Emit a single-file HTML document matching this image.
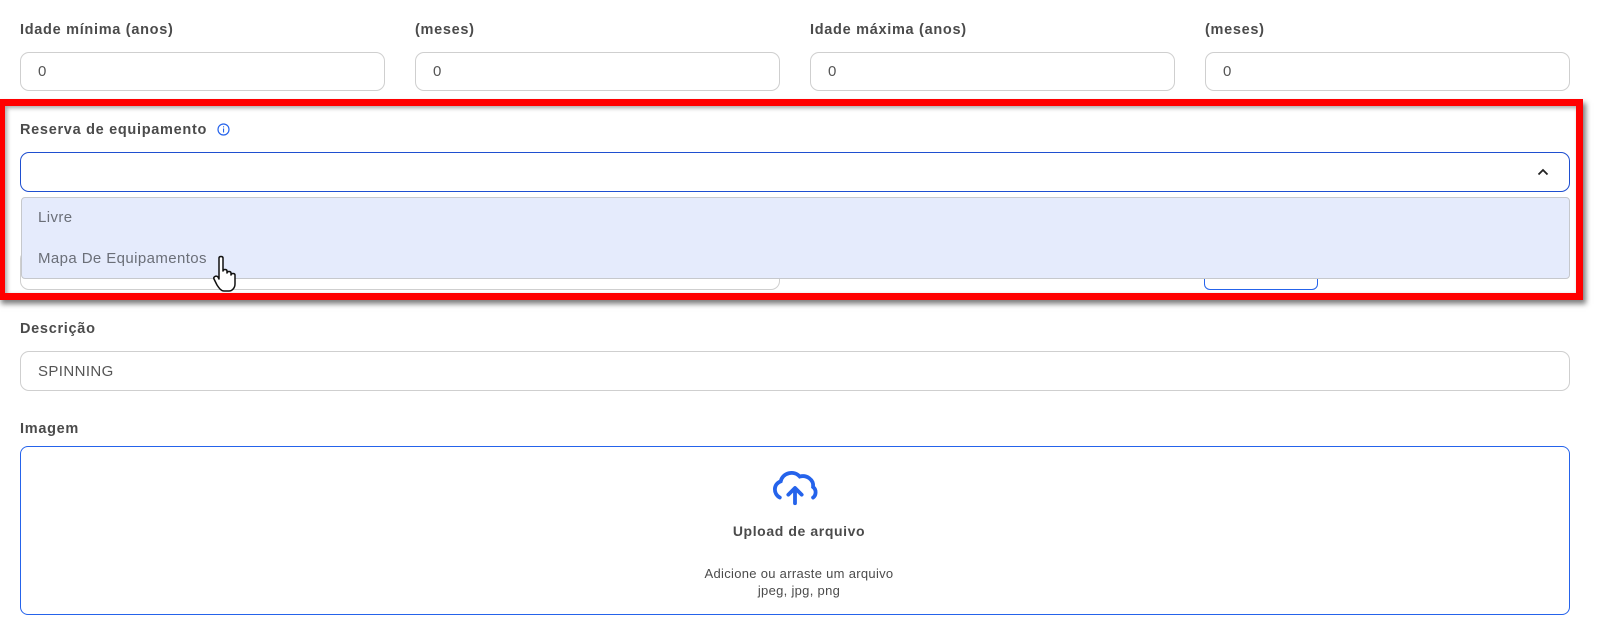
<!DOCTYPE html>
<html><head><meta charset="utf-8"><style>
*{box-sizing:border-box;margin:0;padding:0}
body{width:1598px;height:637px;background:#fff;position:relative;overflow:hidden;font-family:"Liberation Sans",sans-serif;color:#4a4a4a}
.lbl{position:absolute;font-weight:bold;font-size:14.5px;letter-spacing:0.7px;color:#4b4b4b;line-height:16px}
.inp{position:absolute;border:1px solid #cfcfcf;border-radius:9px;background:#fff;font-size:15px;letter-spacing:0.4px;color:#555;padding-left:17px;display:flex;align-items:center}
.abs{position:absolute}
</style></head><body>
<div class="lbl" style="left:20px;top:22px">Idade mínima (anos)</div>
<div class="lbl" style="left:415px;top:22px">(meses)</div>
<div class="lbl" style="left:810px;top:22px">Idade máxima (anos)</div>
<div class="lbl" style="left:1205px;top:22px">(meses)</div>
<div class="inp" style="left:20px;top:52px;width:365px;height:39px">0</div>
<div class="inp" style="left:415px;top:52px;width:365px;height:39px">0</div>
<div class="inp" style="left:810px;top:52px;width:365px;height:39px">0</div>
<div class="inp" style="left:1205px;top:52px;width:365px;height:39px">0</div>

<div class="inp" style="left:20px;top:250px;width:760px;height:40px"></div>
<div class="abs" style="left:813px;top:270px;width:10px;height:3px;background:#8aa8f0"></div>
<div class="abs" style="left:1204px;top:250px;width:114px;height:40px;border:1.5px solid #2563eb;border-radius:6px"></div>

<div class="lbl" style="left:20px;top:122px">Reserva de equipamento</div>
<svg class="abs" style="left:217px;top:123px" width="13" height="13" viewBox="0 0 13 13"><circle cx="6.5" cy="6.5" r="5.5" fill="none" stroke="#2563eb" stroke-width="1.2"/><rect x="6" y="5.5" width="1.1" height="4" fill="#2563eb"/><rect x="6" y="3.3" width="1.1" height="1.1" fill="#2563eb"/></svg>
<div class="abs" style="left:20px;top:152px;width:1550px;height:40px;border:1.5px solid #1f4fd0;border-radius:9px;background:#fff"></div>
<svg class="abs" style="left:1537px;top:168px" width="12" height="8" viewBox="0 0 12 8"><path d="M1.5 6.5 L6 2 L10.5 6.5" fill="none" stroke="#222" stroke-width="1.8"/></svg>
<div class="abs" style="left:21px;top:197px;width:1549px;height:82px;background:#e5ebfc;border:1px solid #c6c8cc;border-radius:4px"></div>
<div class="abs" style="left:38px;top:209px;font-size:15px;letter-spacing:0.4px;color:#6b6f78">Livre</div>
<div class="abs" style="left:38px;top:250px;font-size:15px;letter-spacing:0.4px;color:#6b6f78">Mapa De Equipamentos</div>
<svg class="abs" style="left:212px;top:255px" width="30" height="40" viewBox="0 0 30 40"><path d="M7 3 C7 1 11 1 11 3 L11 16 C11 14 15 14 15 16 L15 18 C15 16 19 16 19 18 L19 20 C19 18 23 18 23 20 L23 29 C23 33 20 36 17 36 L12 36 C9 36 7 33 5 30 L2 24 C1 22 4 20 6 22 L7 24 Z" fill="#fff" stroke="#111" stroke-width="1.5" stroke-linejoin="round"/></svg>

<div class="abs" style="left:-2px;top:99px;width:1585px;height:201px;border:7px solid #ff0000;box-shadow:3px 4px 5px rgba(0,0,0,.5), inset 2px 2px 4px rgba(0,0,0,.35)"></div>

<div class="lbl" style="left:20px;top:321px">Descrição</div>
<div class="inp" style="left:20px;top:351px;width:1550px;height:40px">SPINNING</div>
<div class="lbl" style="left:20px;top:421px">Imagem</div>
<div class="abs" style="left:20px;top:446px;width:1550px;height:169px;border:1.5px solid #2563eb;border-radius:8px"></div>
<svg class="abs" style="left:770px;top:468px" width="50" height="40" viewBox="0 0 52 42"><path d="M10 31 C3 27 3 17 11 14 C13 5 25 2 31 9 C38 7 46 12 45 20 C49 23 48 29 45 31" fill="none" stroke="#2563eb" stroke-width="4" stroke-linecap="round"/><path d="M26 37 L26 22 M19 28 L26 21 L33 28" fill="none" stroke="#2563eb" stroke-width="4" stroke-linecap="round" stroke-linejoin="round"/></svg>
<div class="abs" style="left:0;width:1598px;text-align:center;top:523px;font-size:14px;letter-spacing:0.6px;font-weight:bold;color:#4b4b4b">Upload de arquivo</div>
<div class="abs" style="left:0;width:1598px;text-align:center;top:565px;font-size:13px;letter-spacing:0.3px;color:#4b4b4b;line-height:17px">Adicione ou arraste um arquivo<br>jpeg, jpg, png</div>
</body></html>
